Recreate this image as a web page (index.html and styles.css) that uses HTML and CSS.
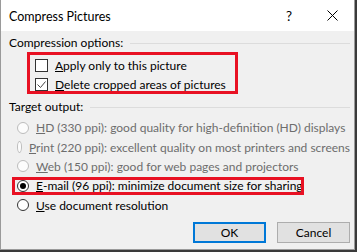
FILE: index.html
```html
<!DOCTYPE html>
<html>

<head>
    <title>Compress Pictures</title>
    <link rel="stylesheet" href="styles.css">
</head>

<body>
    <div class="dialog">
        <div class="titlebar">
            <span class="title">Compress Pictures</span>
            <span class="help">?</span>
            <svg class="close" width="11" height="11" viewBox="0 0 11 11">
                <path d="M0.5 0.5 L10.5 10.5 M10.5 0.5 L0.5 10.5" stroke="#000" stroke-width="1" fill="none" />
            </svg>
        </div>

        <div class="content">
            <div class="group-label">
                <span>Compression options:</span>
                <span class="rule"></span>
            </div>
            <div class="checks">
                <label class="check-row">
                    <span class="checkbox"></span>
                    <span><u>A</u>pply only to this picture</span>
                </label>
                <label class="check-row">
                    <span class="checkbox">
                        <svg width="11" height="11" viewBox="0 0 11 11">
                            <polyline points="1.5,5.5 4.5,8.5 9.5,2.5" stroke="#444" stroke-width="1" fill="none" />
                        </svg>
                    </span>
                    <span><u>D</u>elete cropped areas of pictures</span>
                </label>
            </div>

            <div class="group-label target">
                <span>Target output:</span>
                <span class="rule"></span>
            </div>
            <div class="radios">
                <div class="radio-row disabled">
                    <span class="radio"></span>
                    <span><u>H</u>D (330 ppi): good quality for high-definition (HD) displays</span>
                </div>
                <div class="radio-row disabled">
                    <span class="radio"></span>
                    <span><u>P</u>rint (220 ppi): excellent quality on most printers and screens</span>
                </div>
                <div class="radio-row disabled">
                    <span class="radio"></span>
                    <span><u>W</u>eb (150 ppi): good for web pages and projectors</span>
                </div>
                <div class="radio-row">
                    <span class="radio selected"></span>
                    <span><u>E</u>-mail (96 ppi): minimize document size for sharing</span>
                </div>
                <div class="radio-row">
                    <span class="radio"></span>
                    <span><u>U</u>se document resolution</span>
                </div>
            </div>

            <div class="buttons">
                <button class="button default">OK</button>
                <button class="button">Cancel</button>
            </div>
        </div>

        <!-- annotation frames drawn over the dialog -->
        <div class="mark mark-options"></div>
        <div class="mark mark-email"></div>
    </div>
</body>

</html>
```

FILE: styles.css
```css
body {
    margin: 0;
    background-color: #3a3a3a;
    font-family: Lato, "Noto Sans", sans-serif;
    font-size: 12px;
    color: #000;
}

.dialog {
    position: relative;
    width: 353px;
    height: 249px;
    background-color: #f0f0f0;
    border: 1px solid #9a9a9a;
    border-top: none;
    white-space: nowrap;
}

.titlebar {
    display: flex;
    align-items: center;
    height: 31px;
    background-color: #fff;
    padding-left: 8px;
}

.title {
    flex: 1;
    font-size: 12.5px;
    padding-top: 1px;
}

.help {
    font-size: 13.5px;
    margin-right: 35px;
    padding-top: 1px;
}

.close {
    margin-right: 16px;
}

.content {
    padding: 4px 4px 0 8px;
}

.group-label {
    display: flex;
    align-items: center;
    height: 16px;
    line-height: 16px;
}

.group-label.target {
    margin-top: 6px;
}

.rule {
    flex: 1;
    height: 1px;
    margin-left: 7px;
    background-color: #dcdcdc;
}

.checks {
    margin: 5px 0 0 26px;
}

.check-row {
    display: flex;
    align-items: center;
    height: 18px;
    margin-bottom: 1px;
}

.checkbox {
    display: flex;
    align-items: center;
    justify-content: center;
    width: 11px;
    height: 11px;
    border: 1px solid #333;
    background-color: #fff;
    margin-right: 7px;
}

.radios {
    margin: 3px 0 0 8px;
}

.radio-row {
    display: flex;
    align-items: center;
    height: 19.4px;
}

.radio {
    display: flex;
    align-items: center;
    justify-content: center;
    box-sizing: border-box;
    width: 12px;
    height: 12px;
    border: 1px solid #333;
    border-radius: 50%;
    background-color: #fff;
    margin-right: 7px;
}

.radio.selected:after {
    content: "";
    width: 6px;
    height: 6px;
    border-radius: 50%;
    background-color: #000;
}

.disabled {
    color: #6d6d6d;
}

.disabled .radio {
    border-color: #bcbcbc;
    background-color: #fcfcfc;
}

.buttons {
    display: flex;
    justify-content: flex-end;
    gap: 11px;
    margin-top: 7px;
}

.button {
    box-sizing: border-box;
    width: 73px;
    height: 21px;
    padding: 0;
    border: 1px solid #adadad;
    background-color: #e1e1e1;
    font-family: inherit;
    font-size: 12px;
    color: #000;
}

.button.default {
    border: 2px solid #0078d7;
}

.mark {
    position: absolute;
    border: 3px solid #e81123;
}

.mark-options {
    left: 26px;
    top: 52px;
    width: 205px;
    height: 36px;
}

.mark-email {
    left: 11px;
    top: 177px;
    width: 286px;
    height: 12px;
}
```
